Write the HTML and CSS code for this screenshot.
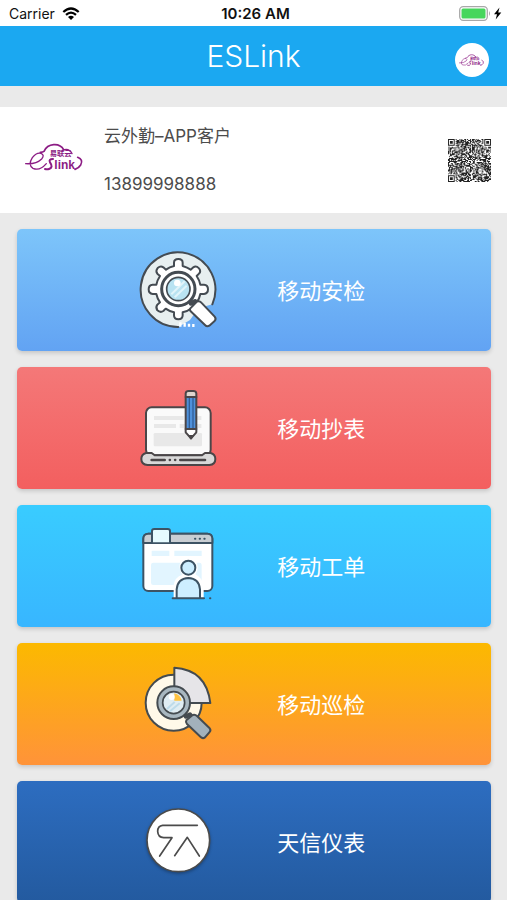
FILE: index.html
```html
<!DOCTYPE html>
<html lang="zh-CN">
<head>
<meta charset="utf-8">
<meta name="viewport" content="width=device-width, initial-scale=1">
<title>ESLink</title>
<link rel="stylesheet" href="styles.css">
</head>
<body>
<div class="status">
  <div class="status-side">
    <span>Carrier</span>
    <svg class="wifi" viewBox="0 0 18 13" aria-hidden="true">
      <g fill="none" stroke="#000" stroke-width="2.2">
        <path d="M1.3 5Q9-2 16.700 5"/>
        <path d="M4 7.900Q9 3.400 14 7.900"/>
      </g>
      <path d="M6 10Q9 7.400 12 10L9 13z"/>
    </svg>
  </div>
  <time class="clock">10:26 AM</time>
  <div class="status-side status-end">
    <svg class="battery" viewBox="0 0 43 15" aria-hidden="true">
      <rect x=".7" y=".7" width="27.600" height="13.600" rx="3.500" fill="#fff" stroke="#a8a8a8" stroke-width="1.300"/>
      <rect x="2.500" y="2.500" width="24" height="10" rx="1.500" fill="#46d65c"/>
      <path d="M30 5Q32 7.500 30 10z" fill="#a8a8a8"/>
      <path d="M40.500 1.500L35 8.200H38L36.700 13.500L42.300 6.600H39.200z"/>
    </svg>
  </div>
</div>

<header class="bar">
  <h1>ESLink</h1>
  <button class="avatar" type="button" aria-label="ESLink"><svg viewBox="0 0 180 90"><use href="#logo"/></svg></button>
</header>

<main>
  <section class="profile">
    <svg class="brand" viewBox="0 6 180 90" aria-hidden="true">
      <g id="logo">
        <g fill="none" stroke="#8c1c84" stroke-linecap="round">
          <path stroke-width="4" d="M2 62Q34 64 50 48Q60 36 48 31Q34 28 22 44Q8 66 24 76Q44 85 64 62"/>
          <path stroke-width="5" d="M46 28Q54 27 57 25C68 0 104 -2 116 20"/>
          <path stroke-width="4" d="M112 22Q132 14 141 32"/>
          <path stroke-width="5" d="M158 43Q176 50 167 66Q161 76 150 79"/>
          <path stroke-width="6" d="M84 48Q70 48 75 58Q86 73 72 78Q66 80 60 78"/>
        </g>
        <text class="logo-cn" x="74" y="39">易联云</text>
        <text class="logo-en" x="88" y="79">link</text>
      </g>
    </svg>
    <div class="who">
      <p>云外勤–APP客户</p>
      <p>13899998888</p>
    </div>
    <svg class="qr" id="qr" viewBox="0 0 45 45" aria-hidden="true"></svg>
  </section>

  <nav class="menu">
    <a class="card sky" href="#">
      <svg class="icon" viewBox="0 0 300 300" aria-hidden="true">
        <g stroke="#444b52" stroke-width="6" stroke-linejoin="round" stroke-linecap="round">
          <path fill="#e7eff0" d="M145 261A112 112 0 1 1 247 193L205 205L180 240Z" stroke="none"/>
          <path fill="none" d="M145 261A112 112 0 1 1 247 193"/>
          <path fill="#fff" d="M132 78V68Q132 57 145 57Q158 57 158 68V78Q172 82 182 89L190 82Q198 76 207 85Q214 94 207 101L200 108Q208 120 211 134H222Q234 135 234 148Q234 161 222 162H211Q208 177 200 188L207 195Q214 204 207 212Q198 220 190 213L182 206Q172 214 158 217V226Q158 238 145 238Q132 238 132 226V217Q118 214 107 206L100 213Q91 219 82 211Q76 202 82 194L90 187Q82 176 79 162H68Q56 161 56 148Q56 135 68 134H79Q82 120 90 108L82 101Q76 93 83 84Q92 76 100 82L108 89Q119 81 132 78Z"/>
          <circle cx="145" cy="147" r="50" fill="#fff" stroke-width="9"/>
          <circle cx="145" cy="147" r="35" fill="#b9e3f2" stroke-width="5"/>
          <path d="M183 190L195 184" stroke-width="14"/>
          <path fill="#fff" d="M181 205L201 185Q208 181 214 188L254 230Q260 237 253 244L238 257Q231 261 225 255L182 214Q178 209 181 205Z"/>
        </g>
        <path d="M124 163L164 124M134 172L170 137" stroke="#e1f4fa" stroke-width="6"/>
        <circle cx="142" cy="129" r="10" fill="#fff"/>
        <path d="M151 247V260M164 249V260M177 251V260M190 252V261" stroke="#fff" stroke-width="7"/>
      </svg>
      <span>移动安检</span>
    </a>
    <a class="card coral" href="#">
      <svg class="icon" viewBox="0 -6 300 300" aria-hidden="true">
        <g stroke="#4a4648" stroke-width="6" stroke-linejoin="round" stroke-linecap="round">
          <rect x="48" y="82" width="194" height="144" rx="17" fill="#fafafa"/>
          <path fill="#d8d8d8" d="M48 219H65L74 226H216L225 219H242Q256 223 256 237Q256 254 238 255H53Q34 254 34 237Q34 223 48 219Z"/>
          <path d="M65 240H104M151 240H225" stroke-width="8"/>
          <path d="M119 240H120M135 240H136" stroke-width="7"/>
        </g>
        <path d="M72 114H161M201 114H214M72 138H138M149 138H164M201 138H214" stroke="#e8e8e8" stroke-width="12"/>
        <rect x="71" y="159" width="145" height="40" rx="4" fill="#e8e8e8"/>
        <g stroke="#4a4648" stroke-width="6" stroke-linejoin="round">
          <path fill="#4f91db" d="M167 51H199V147H167Z"/>
          <path d="M178 53V145M189 53V145" stroke="#315f98" stroke-width="4"/>
          <path fill="#ddd5ce" d="M167 51V40Q168 33 176 33H190Q198 33 199 40V51Z"/>
          <path fill="#fff" d="M167 147H199V157L183 175L167 157Z"/>
          <path fill="#333" d="M178 168H188L183 175Z"/>
        </g>
      </svg>
      <span>移动抄表</span>
    </a>
    <a class="card cyan" href="#">
      <svg class="icon" viewBox="0 3 300 300" aria-hidden="true">
        <g stroke="#3d5364" stroke-width="6" stroke-linejoin="round" stroke-linecap="round">
          <rect x="40" y="56" width="207" height="172" rx="15" fill="#fff"/>
          <path fill="#c9ced3" d="M40 84V71Q40 56 55 56H232Q247 56 247 71V84Z"/>
          <path fill="#e6fbff" d="M66 82V48Q66 42 73 42H113Q120 42 120 48V82"/>
          <path d="M195 71H196M209 71H210M223 71H224" stroke-width="6"/>
        </g>
        <path d="M65 115H118M133 115H215" stroke="#e2f5ff" stroke-width="16"/>
        <rect x="63" y="143" width="152" height="67" rx="7" fill="#e2f5ff"/>
        <path fill="#fff" d="M131 249V211Q134 186 157 179Q141 153 155 137Q177 119 197 137Q210 158 196 178Q216 188 221 211V249Z"/>
        <g stroke="#3d5364" stroke-width="6" stroke-linecap="round" fill="#cdeeff">
          <circle cx="175" cy="158" r="21"/>
          <path d="M140 249V223Q143 190 175 189Q207 190 210 223V249"/>
          <path d="M128 250H222M240 250H241"/>
        </g>
      </svg>
      <span>移动工单</span>
    </a>
    <a class="card amber" href="#">
      <svg class="icon" viewBox="0 -3 300 300" aria-hidden="true">
        <g stroke="#444b50" stroke-width="6" stroke-linejoin="round" stroke-linecap="round">
          <circle cx="131" cy="143" r="84" fill="#fff9e9"/>
          <path fill="#e6e5e8" d="M133 38Q229 44 241 144H133Z"/>
          <circle cx="131" cy="143" r="49" fill="#a8b7c0"/>
          <circle cx="131" cy="143" r="33" fill="#e0edf3" stroke-width="5"/>
          <path d="M168 184L180 179" stroke-width="14"/>
          <path fill="#a2b1bb" d="M169 196L188 180Q195 177 201 183L239 220Q244 226 238 232L225 247Q218 252 212 246L171 207Q166 201 169 196Z"/>
        </g>
        <path fill="#ffc341" d="M133 115A28 28 0 0 1 155 137H133Z"/>
        <path d="M111 162L134 141M120 169L149 145" stroke="#bddbea" stroke-width="6"/>
        <circle cx="125" cy="126" r="9" fill="#fff"/>
      </svg>
      <span>移动巡检</span>
    </a>
    <a class="card navy" href="#">
      <svg class="icon" viewBox="0 -9 300 300" aria-hidden="true">
        <g stroke="#4b4b4b" stroke-width="5" stroke-linejoin="round" stroke-linecap="round">
          <circle class="disc" cx="145" cy="136" r="94" fill="#fff"/>
          <path fill="none" d="M202 91H98Q83 93 83 109Q84 127 101 128H126L89 183M134 182L172 127L208 183"/>
        </g>
      </svg>
      <span>天信仪表</span>
    </a>
  </nav>
</main>
<script src="qr.js"></script>
</body>
</html>
```
FILE: styles.css
```css
* {
  box-sizing: border-box;
}

html {
  scrollbar-width: none;
}

body {
  margin: 0;
  background: #eaeaea;
  color: #4c4c4c;
  font-family: Inter, "Noto Sans CJK SC", sans-serif;
}

.status {
  display: flex;
  align-items: center;
  height: 26px;
  padding: 0 5px 0 9px;
  background: #fff;
  color: #111;
  font-size: 14px;
}

.status-side {
  display: flex;
  flex: 1;
  align-items: center;
  gap: 7px;
}

.status-end {
  justify-content: flex-end;
}

.wifi {
  width: 18px;
  height: 13px;
}

.battery {
  width: 43px;
  height: 15px;
}

.clock {
  font-size: 15px;
  font-weight: 600;
}

.bar {
  display: grid;
  grid-template-columns: 1fr auto 1fr;
  align-items: center;
  height: 60px;
  padding: 0 18px;
  background: #1ba8f1;
  color: #fff;
}

.bar h1 {
  grid-column: 2;
  margin: 0;
  font-size: 30px;
  font-weight: 300;
}

.avatar {
  display: flex;
  align-items: center;
  justify-content: center;
  justify-self: end;
  width: 34px;
  height: 34px;
  margin-top: 8px;
  padding: 0;
  border: 0;
  border-radius: 50%;
  background: #fff;
}

.avatar svg {
  width: 26px;
  height: 13px;
}

.logo-cn {
  fill: #8c1c84;
  font-size: 22px;
  font-weight: 700;
}

.logo-en {
  fill: #8c1c84;
  font-family: "Liberation Sans Narrow", "Liberation Sans", sans-serif;
  font-size: 36px;
  font-weight: 700;
}

.profile {
  display: flex;
  align-items: center;
  height: 106px;
  margin: 21px 0 16px;
  padding: 0 16px 0 25px;
  background: #fff;
}

.brand {
  width: 60px;
  height: 30px;
  overflow: visible;
}

.who {
  display: grid;
  flex: 1;
  gap: 24px;
  margin-left: 19px;
  font-size: 17px;
  line-height: 24px;
}

.who p {
  margin: 0;
}

.qr {
  width: 43px;
  height: 43px;
}

.menu {
  display: grid;
  gap: 16px;
  padding: 0 16px 16px 17px;
}

.card {
  display: grid;
  grid-template-columns: 45% 1fr;
  align-items: center;
  height: 122px;
  padding-left: 47px;
  border-radius: 5px;
  box-shadow: 0 2px 4px rgba(0, 0, 0, 0.16);
  color: #fff;
  font-size: 22px;
  text-decoration: none;
}

.icon {
  justify-self: end;
  width: 100px;
  height: 100px;
  margin-right: 26px;
}

.card span {
  padding: 0 0 2px 21px;
}

.sky {
  background: linear-gradient(#7dc5fa, #62a3f3);
}

.coral {
  background: linear-gradient(#f47878, #f35f5f);
}

.cyan {
  background: linear-gradient(#39ccff, #38b6ff);
}

.amber {
  background: linear-gradient(#fcb900, #ff9339);
}

.navy {
  background: linear-gradient(#2d6dc0, #235a9f);
}

.disc {
  filter: drop-shadow(0 4px 5px rgba(0, 0, 0, 0.3));
}
```
FILE: qr.js
```js
// Fills the code with a steady pattern of modules and three corner finders.
const size = 45;
let seed = 1389;
let path = "";

function next() {
  seed = (seed * 1103515245 + 12345) % 2147483648;
  return seed / 2147483648;
}

function finder(x, y) {
  const inX = x < 8 ? x : size - 1 - x;
  const inY = y < 8 ? y : size - 1 - y;
  if (inX > 7 || inY > 7 || (x > 8 && y > 8)) return null;
  const ring = Math.max(Math.abs(inX - 3), Math.abs(inY - 3));
  return ring !== 2 && ring < 4;
}

for (let y = 0; y < size; y++) {
  for (let x = 0; x < size; x++) {
    const corner = finder(x, y);
    const dark = next() < 0.58;
    if (corner === null ? dark : corner) path += `M${x} ${y}h1v1h-1z`;
  }
}

const modules = document.createElementNS("http://www.w3.org/2000/svg", "path");
modules.setAttribute("d", path);
modules.setAttribute("fill", "#222");
document.getElementById("qr").append(modules);
```
